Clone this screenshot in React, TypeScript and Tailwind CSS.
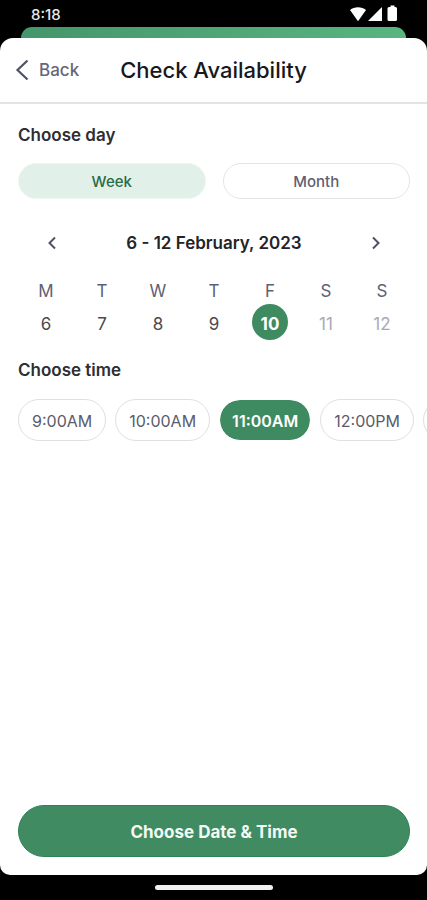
import React, { useState } from 'react';

const days = [
    { letter: 'M', date: 6, disabled: false },
    { letter: 'T', date: 7, disabled: false },
    { letter: 'W', date: 8, disabled: false },
    { letter: 'T', date: 9, disabled: false },
    { letter: 'F', date: 10, disabled: false },
    { letter: 'S', date: 11, disabled: true },
    { letter: 'S', date: 12, disabled: true },
];

const times = ['9:00AM', '10:00AM', '11:00AM', '12:00PM', '1:00PM'];

const StatusBar: React.FC = () => (
    <div className="flex h-[27px] items-start justify-between pt-1 pr-7 pl-[31px] text-[#e8e8e8]">
        <span className="text-[15px] leading-[22px] font-medium">8:18</span>
        <div className="flex items-center">
            <svg width="18" height="18" viewBox="0 0 18 18" fill="#fff" aria-hidden="true"><path d="M1 6C3.200 4.200 6 3.200 9 3.200s5.800 1 8 2.800L9 17.200z" /></svg>
            <svg width="16" height="18" viewBox="0 0 16 18" fill="#fff" aria-hidden="true"><path d="M15 3v14H1z" /></svg>
            <svg width="16" height="18" viewBox="0 0 16 18" fill="#fff" aria-hidden="true"><path d="M7.500 1.500h4V3h1A1.500 1.500 0 0 1 14 4.500v11a1.500 1.500 0 0 1-1.500 1.500h-6.500a1.500 1.500 0 0 1-1.500-1.500v-11A1.500 1.500 0 0 1 6 3h1.500z" /></svg>
        </div>
    </div>
);

const Chevron: React.FC<{ direction: 'left' | 'right' }> = ({ direction }) => (
    <svg width="16" height="16" viewBox="0 0 16 16" fill="none" stroke="#50506a" strokeWidth="2" aria-hidden="true">
        <path d={direction === 'left' ? 'M11 2.500 5.500 8l5.500 5.500' : 'M5 2.500 10.500 8 5 13.500'} />
    </svg>
);

const WeekPicker: React.FC = () => {
    const [selected, setSelected] = useState(10);

    return (
        <>
            <div className="mt-8 flex items-center justify-between px-[25px]">
                <button aria-label="Previous week" className="p-px"><Chevron direction="left" /></button>
                <h3 className="text-[17px] leading-6 font-semibold text-[#242428]">6 - 12 February, 2023</h3>
                <button aria-label="Next week" className="p-px"><Chevron direction="right" /></button>
            </div>
            <div className="mt-6 grid grid-cols-7">
                {days.map(day => (
                    <div key={day.date} className="flex flex-col items-center">
                        <span className="text-[17px] leading-6 text-[#606073]">{day.letter}</span>
                        <button
                            disabled={day.disabled}
                            aria-pressed={selected === day.date}
                            onClick={() => setSelected(day.date)}
                            className={`mt-px size-9 rounded-full pt-[3px] text-[17px] leading-6 ${selected === day.date ? 'bg-[#3e8a61] font-bold text-white' : day.disabled ? 'text-[#a9a9b3]' : 'text-[#4a4a50]'}`}
                        >
                            {day.date}
                        </button>
                    </div>
                ))}
            </div>
        </>
    );
};

export default function App() {
    const [view, setView] = useState<'Week' | 'Month'>('Week');
    const [time, setTime] = useState('11:00AM');

    return (
        <div className="flex min-h-screen flex-col bg-black font-['Inter',sans-serif]">
            <StatusBar />
            <div className="mx-[21px] h-[11px] rounded-t-[12px] bg-linear-to-r from-[#45966a] to-[#58b580]" />

            <main className="flex flex-1 flex-col overflow-hidden rounded-t-[13px] rounded-b-[10px] bg-white">
                <header className="grid grid-cols-[1fr_auto_1fr] items-center border-b-2 border-[#e4e4e6] px-[14px] pt-4 pb-4">
                    <button className="flex items-center gap-2 justify-self-start text-[17px] leading-6 font-medium text-[#66667a]">
                        <svg width="17" height="22" viewBox="0 0 17 22" fill="none" stroke="#50506a" strokeWidth="2.200" aria-hidden="true"><path d="M13.500 1.500 3.500 11l10 9.500" /></svg>
                        Back
                    </button>
                    <h1 className="text-[22px] leading-8 font-medium text-[#18181c]">Check Availability</h1>
                </header>

                <section className="pt-[19px] pr-[17px] pl-[18px]">
                    <h2 className="text-[17px] leading-6 font-semibold text-[#2e2e33]">Choose day</h2>
                    <div className="mt-4 grid grid-cols-2 gap-[17px]">
                        {(['Week', 'Month'] as const).map(v => (
                            <button
                                key={v}
                                aria-pressed={view === v}
                                onClick={() => setView(v)}
                                className={`h-9 rounded-full border pt-0.5 text-[15px] leading-5 font-medium ${view === v ? 'border-[#eef7f2] bg-[#e1f0e8] text-[#2a6b49]' : 'border-[#e4e4e8] text-[#5f5f72]'}`}
                            >
                                {v}
                            </button>
                        ))}
                    </div>
                    <WeekPicker />
                </section>

                <section className="pt-[18px]">
                    <h2 className="px-[18px] text-[17px] leading-6 font-semibold text-[#2e2e33]">Choose time</h2>
                    <div className="mt-[17px] flex gap-[9px] overflow-x-auto px-[18px] [scrollbar-width:none]">
                        {times.map(t => (
                            <button
                                key={t}
                                aria-pressed={time === t}
                                onClick={() => setTime(t)}
                                className={`h-[42px] shrink-0 rounded-full border pt-0.5 text-[16px] leading-5 ${time === t ? 'border-white bg-[#3e8a61] bg-clip-padding px-3 font-semibold text-white' : 'border-[#e0e0e4] px-[13px] text-[#5b5b6c]'}`}
                            >
                                {t}
                            </button>
                        ))}
                    </div>
                </section>

                <div className="mt-auto pr-[17px] pb-[18px] pl-[18px]">
                    <button className="h-[52px] w-full rounded-full border border-[#2b8456] bg-[#408b61] pt-0.5 text-[17px] leading-6 font-bold text-[#f2faf5]">Choose Date &amp; Time</button>
                </div>
            </main>

            <div className="flex h-[25px] justify-center pt-[10px]">
                <div className="h-[5px] w-[118px] rounded-full bg-[#f0f0f0]" />
            </div>
        </div>
    );
}
